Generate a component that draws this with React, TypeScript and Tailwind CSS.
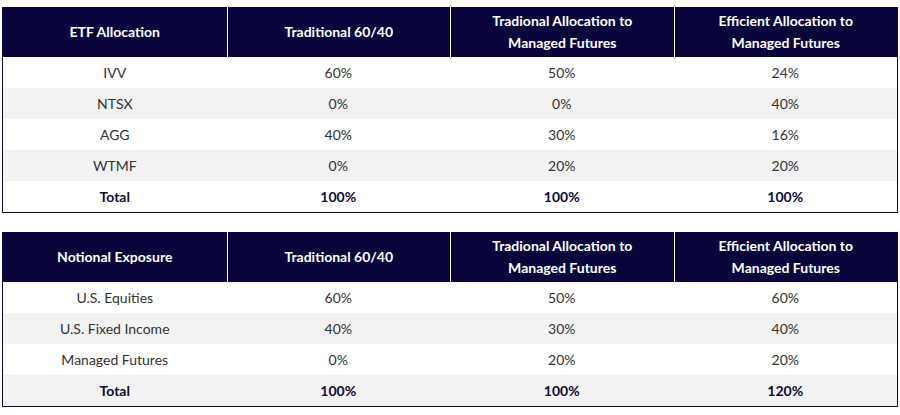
import React from "react";

type Table = {
  headers: string[][];
  rows: string[][];
  total: string[];
};

const t1: Table = {
  headers: [["ETF Allocation"], ["Traditional 60/40"], ["Tradional Allocation to", "Managed Futures"], ["Efficient Allocation to", "Managed Futures"]],
  rows: [
    ["IVV", "60%", "50%", "24%"],
    ["NTSX", "0%", "0%", "40%"],
    ["AGG", "40%", "30%", "16%"],
    ["WTMF", "0%", "20%", "20%"],
  ],
  total: ["Total", "100%", "100%", "100%"],
};

const t2: Table = {
  headers: [["Notional Exposure"], ["Traditional 60/40"], ["Tradional Allocation to", "Managed Futures"], ["Efficient Allocation to", "Managed Futures"]],
  rows: [
    ["U.S. Equities", "60%", "50%", "60%"],
    ["U.S. Fixed Income", "40%", "30%", "40%"],
    ["Managed Futures", "0%", "20%", "20%"],
  ],
  total: ["Total", "100%", "100%", "120%"],
};

function DataTable({ t }: { t: Table }) {
  return (
    <div className="ml-[2px] w-[896px] border-x border-b border-[#0c0a30]">
      <div className="grid grid-cols-4 h-[50px] bg-[#07053a] text-white font-bold text-[14px] leading-[22px]">
        {t.headers.map((h, i) => (
          <div
            key={i}
            className={`flex flex-col items-center justify-center text-center ${i > 0 ? "border-l border-white" : ""}`}
          >
            {h.map((line, j) => (
              <span key={j}>{line}</span>
            ))}
          </div>
        ))}
      </div>
      {t.rows.map((r, i) => (
        <div
          key={i}
          className={`grid grid-cols-4 h-[31px] items-center text-[14px] text-[#333333] ${i % 2 === 1 ? "bg-[#f2f2f2]" : "bg-white"}`}
        >
          {r.map((c, j) => (
            <div key={j} className="text-center">
              {c}
            </div>
          ))}
        </div>
      ))}
      <div
        className={`grid grid-cols-4 h-[31px] items-center text-[14px] font-bold text-[#0d0b33] ${t.rows.length % 2 === 1 ? "bg-[#f2f2f2]" : "bg-white"}`}
      >
        {t.total.map((c, j) => (
          <div key={j} className="text-center">
            {c}
          </div>
        ))}
      </div>
    </div>
  );
}

export default function App() {
  return (
    <div
      className="w-[900px] h-[415px] bg-white pt-[7px] flex flex-col gap-[19px]"
      style={{ fontFamily: "Lato, 'Open Sans', sans-serif" }}
    >
      <DataTable t={t1} />
      <DataTable t={t2} />
    </div>
  );
}
